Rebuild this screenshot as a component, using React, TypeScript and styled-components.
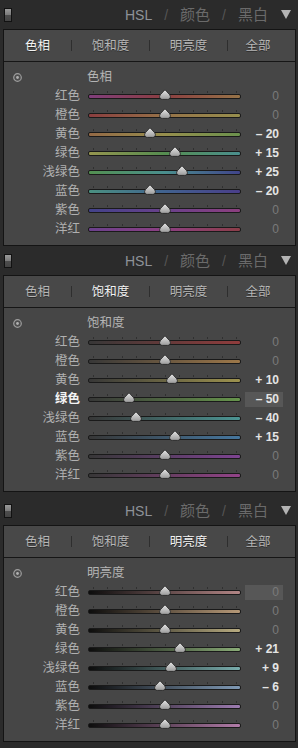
import React from 'react';
import styled, { createGlobalStyle } from 'styled-components';

const GlobalStyle = createGlobalStyle`
  html, body {
    margin: 0;
    padding: 0;
    background: #2b2b2b;
  }
  body {
    width: 298px;
    height: 748px;
    overflow: hidden;
    font-family: "Liberation Sans", "Noto Sans CJK SC", sans-serif;
  }
`;

type Row = { label: string; value: number; from: string; mid?: string; to: string };

type SectionData = {
  active: number;
  title: string;
  rows: Row[];
  activeRow?: number;
  focusRow?: number;
  lead?: number;
};

const TABS = ['色相', '饱和度', '明亮度', '全部'];

const hue: Row[] = [
  { label: '红色', value: 0, from: '#a03c98', mid: '#b23c40', to: '#b07c3a' },
  { label: '橙色', value: 0, from: '#b03c3e', mid: '#b07a3a', to: '#a89c3a' },
  { label: '黄色', value: -20, from: '#b0703a', mid: '#a89c3a', to: '#6aa43c' },
  { label: '绿色', value: 15, from: '#a4a43a', mid: '#4ca044', to: '#3aa2a0' },
  { label: '浅绿色', value: 25, from: '#48a444', mid: '#3aa2a0', to: '#4248b2' },
  { label: '蓝色', value: -20, from: '#3aa48c', mid: '#3a6cb0', to: '#5240b2' },
  { label: '紫色', value: 0, from: '#4646b2', mid: '#7e40b0', to: '#b03c9c' },
  { label: '洋红', value: 0, from: '#8040b2', mid: '#b03ca0', to: '#b23c4c' },
];

const sat: Row[] = [
  { label: '红色', value: 0, from: '#3c3c3c', to: '#b83a3a' },
  { label: '橙色', value: 0, from: '#3c3c3c', to: '#b8803a' },
  { label: '黄色', value: 10, from: '#3c3c3c', to: '#b0a03a' },
  { label: '绿色', value: -50, from: '#3c3c3c', to: '#62a83a' },
  { label: '浅绿色', value: -40, from: '#3c3c3c', to: '#3aa8a6' },
  { label: '蓝色', value: 15, from: '#3c3c3c', to: '#3a84c0' },
  { label: '紫色', value: 0, from: '#3c3c3c', to: '#9a42b8' },
  { label: '洋红', value: 0, from: '#3c3c3c', to: '#b840a8' },
];

const lum: Row[] = [
  { label: '红色', value: 0, from: '#0e0e0e', to: '#d08c8c' },
  { label: '橙色', value: 0, from: '#0e0e0e', to: '#d0a472' },
  { label: '黄色', value: 0, from: '#0e0e0e', to: '#ccba7a' },
  { label: '绿色', value: 21, from: '#0e0e0e', to: '#8cc070' },
  { label: '浅绿色', value: 9, from: '#0e0e0e', to: '#72c0c0' },
  { label: '蓝色', value: -6, from: '#0e0e0e', to: '#80a8d2' },
  { label: '紫色', value: 0, from: '#0e0e0e', to: '#b482d2' },
  { label: '洋红', value: 0, from: '#0e0e0e', to: '#d280c4' },
];

const SECTIONS: SectionData[] = [
  { active: 0, title: '色相', rows: hue },
  { active: 1, title: '饱和度', rows: sat, activeRow: 3, focusRow: 3 },
  { active: 2, title: '明亮度', rows: lum, focusRow: 0, lead: 4 },
];

const Page = styled.div`
  width: 298px;
  display: flex;
  flex-direction: column;
  background: #2b2b2b;
`;

const Header = styled.div<{ $lead?: number }>`
  height: 29px;
  padding: ${(p) => p.$lead || 0}px 7px 0 4px;
  display: flex;
  align-items: center;
  background: #2b2b2b;
`;

const Toggle = styled.div`
  width: 6px;
  height: 12px;
  border: 1px solid #121212;
  background: linear-gradient(to bottom, #9a9a9a 0, #7a7a7a 50%, #4e4e4e 50%, #444 100%);
`;

const HeaderTitle = styled.div`
  margin-left: auto;
  display: flex;
  align-items: center;
  gap: 12px;
  font-size: 15px;
  line-height: 20px;
`;

const HeaderItem = styled.span<{ $on?: boolean }>`
  color: ${(p) => (p.$on ? '#8e9298' : '#6a6a6a')};
  font-size: ${(p) => (p.$on ? '14px' : '15px')};
`;

const Slash = styled.span`
  color: #555;
  font-size: 14px;
`;

const Arrow = styled.svg`
  margin-left: 13px;
  width: 10px;
  height: 9px;
`;

const Panel = styled.div`
  margin: 0 2px 0 3px;
  border: 1px solid #141414;
  background: #464646;
`;

const TabBar = styled.div`
  height: 31px;
  display: flex;
  align-items: center;
  background: #484848;
  border-bottom: 1px solid #161616;
`;

const Tab = styled.div<{ $active?: boolean; $w: number; $pr?: number }>`
  width: ${(p) => p.$w}px;
  padding-right: ${(p) => p.$pr || 0}px;
  box-sizing: border-box;
  text-align: center;
  font-size: 12.5px;
  line-height: 18px;
  color: ${(p) => (p.$active ? '#f2f2f2' : '#b6b6b6')};
  text-shadow: 0 1px 0 #2c2c2c;
`;

const TabSep = styled.div`
  width: 1px;
  height: 11px;
  background: #2e2e2e;
`;

const Content = styled.div`
  padding: 5px 0 6px;
`;

const TitleRow = styled.div`
  height: 20px;
  display: flex;
  align-items: center;
`;

const IconCell = styled.div`
  width: 83px;
  padding-left: 9px;
  box-sizing: border-box;
  display: flex;
  align-items: center;
`;

const TitleText = styled.span`
  font-size: 12.5px;
  line-height: 18px;
  color: #b4b4b4;
`;

const SliderRow = styled.div`
  height: 19px;
  display: flex;
  align-items: flex-start;
`;

const Label = styled.div<{ $active?: boolean }>`
  width: 76px;
  margin-right: 8px;
  text-align: right;
  font-size: 12.5px;
  line-height: 19px;
  color: ${(p) => (p.$active ? '#f4f4f4' : '#b0b0b0')};
  font-weight: ${(p) => (p.$active ? 700 : 400)};
`;

const Slider = styled.div`
  position: relative;
  width: 153px;
  padding-top: 4px;
  display: flex;
  flex-direction: column;
  gap: 1px;
`;

const Ticks = styled.div`
  margin-left: 5px;
  width: 144px;
  height: 2px;
  background: repeating-linear-gradient(to right, #303030 0 1px, transparent 1px 14.3px);
`;

const Track = styled.div<{ $bg: string }>`
  height: 3px;
  border: 1px solid #1c1c1c;
  border-radius: 2px;
  background: ${(p) => p.$bg};
  filter: saturate(0.72) brightness(0.92);
`;

const Knob = styled.svg`
  position: absolute;
  top: 2px;
  width: 12px;
  height: 11px;
`;

const Value = styled.div<{ $zero?: boolean; $focus?: boolean }>`
  width: 38px;
  height: 15px;
  margin: 2px 0 0 4px;
  padding-right: 4px;
  box-sizing: border-box;
  text-align: right;
  font-size: 12px;
  line-height: 15px;
  font-weight: ${(p) => (p.$zero ? 400 : 700)};
  color: ${(p) => (p.$zero ? '#7a7a7a' : '#e4e4e4')};
  background: ${(p) => (p.$focus ? '#575757' : 'transparent')};
`;

const fmt = (v: number) => (v === 0 ? '0' : `${v > 0 ? '+' : '–'} ${Math.abs(v)}`);

const SliderLine: React.FC<{ row: Row; active?: boolean; focus?: boolean }> = ({ row, active, focus }) => {
  const bg = row.mid
    ? `linear-gradient(to right, ${row.from}, ${row.mid} 50%, ${row.to})`
    : `linear-gradient(to right, ${row.from}, ${row.to})`;
  const x = 76.5 + row.value * 0.715 - 6;
  return (
    <SliderRow>
      <Label $active={active}>{row.label}</Label>
      <Slider>
        <Ticks />
        <Track $bg={bg} />
        <Knob viewBox="0 0 12 11" style={{ left: x }}>
          <defs>
            <linearGradient id="knob" x1="0" y1="0" x2="0" y2="1">
              <stop offset="0" stopColor="#e8e8e8" />
              <stop offset="1" stopColor="#9a9a9a" />
            </linearGradient>
          </defs>
          <path
            d="M6 0.6 C7.2 2.8 11.4 5.2 11.4 7.6 C11.4 9.2 10.3 10.4 8.7 10.4 L3.3 10.4 C1.7 10.4 0.6 9.2 0.6 7.6 C0.6 5.2 4.8 2.8 6 0.6 Z"
            fill="url(#knob)"
            stroke="#262626"
            strokeWidth="0.9"
          />
        </Knob>
      </Slider>
      <Value $zero={row.value === 0} $focus={focus}>
        {fmt(row.value)}
      </Value>
    </SliderRow>
  );
};

const Section: React.FC<{ data: SectionData }> = ({ data }) => (
  <>
    <Header $lead={data.lead}>
      <Toggle />
      <HeaderTitle>
        <HeaderItem $on>HSL</HeaderItem>
        <Slash>/</Slash>
        <HeaderItem>颜色</HeaderItem>
        <Slash>/</Slash>
        <HeaderItem>黑白</HeaderItem>
      </HeaderTitle>
      <Arrow viewBox="0 0 10 9">
        <polygon points="0,0 10,0 5,9" fill="#b4b4b4" />
      </Arrow>
    </Header>
    <Panel>
      <TabBar>
        <Tab $w={67} $active={data.active === 0}>{TABS[0]}</Tab>
        <TabSep />
        <Tab $w={77} $active={data.active === 1}>{TABS[1]}</Tab>
        <TabSep />
        <Tab $w={77} $active={data.active === 2}>{TABS[2]}</Tab>
        <TabSep />
        <Tab $w={66} $pr={6} $active={data.active === 3}>{TABS[3]}</Tab>
      </TabBar>
      <Content>
        <TitleRow>
          <IconCell>
            <svg width="9" height="9" viewBox="0 0 9 9">
              <circle cx="4.5" cy="4.5" r="3.8" fill="#4e4e4e" stroke="#9c9c9c" strokeWidth="1.2" />
              <circle cx="4.5" cy="4.5" r="1.4" fill="#b0b0b0" />
            </svg>
          </IconCell>
          <TitleText>{data.title}</TitleText>
        </TitleRow>
        {data.rows.map((r, i) => (
          <SliderLine key={r.label} row={r} active={data.activeRow === i} focus={data.focusRow === i} />
        ))}
      </Content>
    </Panel>
  </>
);

export default function App() {
  return (
    <Page>
      <GlobalStyle />
      {SECTIONS.map((s) => (
        <Section key={s.title} data={s} />
      ))}
    </Page>
  );
}
